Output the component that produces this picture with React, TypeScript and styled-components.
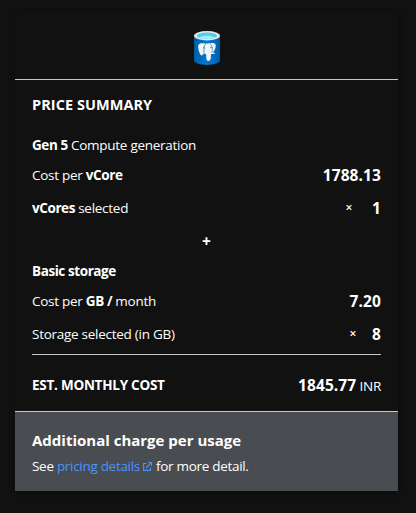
import React from "react";
import styled, { createGlobalStyle } from "styled-components";

const GlobalStyle = createGlobalStyle`
  * { box-sizing: border-box; }
  html, body { margin: 0; background: #111111; }
  body { font-family: "Segoe UI", "Open Sans", "Noto Sans", sans-serif; color: #fff; }
`;

const Page = styled.main`
  height: 513px;
  padding: 12px 18px 22px 15px;
  background: #111111;
  overflow: hidden;
`;

const Card = styled.section`
  width: 383px;
  height: 479px;
  display: flex;
  flex-direction: column;
  background: #111111;
  box-shadow: 0 1px 5px rgba(0, 0, 0, 0.55);
`;

const Header = styled.header`
  height: 68px;
  flex: none;
  display: flex;
  justify-content: center;
  padding-top: 19px;
  border-bottom: 1px solid #c8c6c4;
`;

const Body = styled.div`
  height: 331px;
  flex: none;
  padding: 0 17px;
  display: flex;
  flex-direction: column;
`;

const Row = styled.div<{ $height: number }>`
  height: ${(p) => p.$height}px;
  flex: none;
  display: flex;
  align-items: center;
  justify-content: space-between;
  white-space: pre;
`;

const Text = styled.span<{ $size?: number; $track?: number }>`
  font-size: ${(p) => p.$size ?? 13.5}px;
  line-height: 20px;
  letter-spacing: ${(p) => p.$track ?? -0.27}px;
  white-space: pre;
`;

const Strong = styled.strong<{ $track?: number }>`
  font-weight: 700;
  letter-spacing: ${(p) => p.$track ?? -0.42}px;
`;

const Amount = styled(Text)`
  font-size: 15.5px;
  font-weight: 700;
  letter-spacing: 0.1px;
`;

const Factor = styled.span<{ $gap: number }>`
  display: flex;
  align-items: center;
  gap: ${(p) => p.$gap}px;
`;

const Times = styled(Text)`
  font-size: 12px;
  font-weight: 600;
  padding-top: 1px;
`;

const Plus = styled.div`
  height: 30px;
  flex: none;
  display: flex;
  align-items: center;
  justify-content: center;
`;

const Divider = styled.hr`
  width: 100%;
  height: 1px;
  flex: none;
  margin: 3px 0 0;
  border: 0;
  background: #c8c6c4;
`;

const Footer = styled.footer`
  flex: 1;
  padding: 18px 17px 0;
  display: flex;
  flex-direction: column;
  gap: 6px;
  background: #494c50;
  border-top: 1px solid #c8c6c4;
`;

const Link = styled.a`
  color: #4894fe;
  text-decoration: none;
`;

const LinkIcon = styled.svg`
  margin: 0 4px 0 3px;
  vertical-align: 0;
`;

const PostgresIcon = () => (
  <svg width="26" height="35" viewBox="0 0 26 35" aria-label="PostgreSQL">
    <defs>
      <linearGradient id="body" x1="0" x2="1">
        <stop offset="0" stopColor="#005ba1" />
        <stop offset=".18" stopColor="#0067b8" />
        <stop offset=".5" stopColor="#0078d4" />
        <stop offset=".85" stopColor="#0067b8" />
        <stop offset="1" stopColor="#005ba1" />
      </linearGradient>
    </defs>
    <path d="M0 4.700v24.600c0 2.600 5.800 4.700 13 4.700s13-2.100 13-4.700V4.700z" fill="url(#body)" />
    <ellipse cx="13" cy="4.700" rx="13" ry="4.700" fill="#e8e8e8" />
    <ellipse cx="13" cy="4.700" rx="10.200" ry="3.200" fill="#50d0e8" />
    <path d="M5 6.400c2-1.100 5-1.600 8-1.600s6 .5 8 1.600c-2 1-5 1.500-8 1.500s-6-.5-8-1.500z" fill="#9cebff" />
    <path
      d="M8.400 12.200c-3.400-.4-4.700 1.800-4.100 5.100.6 3.200 1.700 6.700 3.100 7.100 1 .2 1.700-1 2.500-1.800.7.500 1.500.5 2.200.3.200 1.700 0 3.600.4 5.200.4 1.700 1.300 2 2.300 1.800 1.400-.3 1.900-1.300 2-2.800l.2-4.100c1.500.3 3.500 0 4.500-1-1-.1-2-.1-2.300-.5 2-2.900 3.300-7.200 2-8.500-1.500-1.500-3.800-1.200-5.400-.7-1.400-.3-2.700-.2-3.800.4-1.100-.4-2.400-.5-3.600-.5z"
      fill="#f2f4f6"
    />
    <path
      d="M12 12.700c-1.900 1.200-2.100 3.200-1.900 5 .1 1.600-.8 2.900 0 4.600M8.800 16.800c1.200-.3 2-.1 2.300.5M15.900 12.500c1.700 1.400 2.600 3.100 2.400 4.900-.1 1.700.3 2.700-.5 4.500M16 16.700l1.800-.3"
      fill="none"
      stroke="#2876b8"
      strokeWidth=".75"
    />
  </svg>
);

const ExternalIcon = () => (
  <LinkIcon width="9" height="9" viewBox="0 0 9 9" fill="none" stroke="#4894fe">
    <path d="M3.500 1.500H.6v6.900h6.900V5.500M3 6l5-5" strokeWidth="1.100" />
    <path d="M5.200.5h3.300v3.300M7 .8h1.500v1.500" strokeWidth="1.200" />
  </LinkIcon>
);

export default function App() {
  return (
    <Page>
      <GlobalStyle />
      <Card>
        <Header>
          <PostgresIcon />
        </Header>
        <Body>
          <Row $height={49}>
            <Text $size={14.5}><Strong $track={0.05}>PRICE SUMMARY</Strong></Text>
          </Row>
          <Row $height={32}>
            <Text><Strong>Gen 5</Strong> Compute generation</Text>
          </Row>
          <Row $height={28}>
            <Text>Cost per <Strong>vCore</Strong></Text>
            <Amount>1788.13</Amount>
          </Row>
          <Row $height={37}>
            <Text><Strong>vCores</Strong> selected</Text>
            <Factor $gap={20}><Times>×</Times><Amount>1</Amount></Factor>
          </Row>
          <Plus><Amount>+</Amount></Plus>
          <Row $height={29}>
            <Text><Strong>Basic storage</Strong></Text>
          </Row>
          <Row $height={31}>
            <Text>Cost per <Strong>GB /</Strong> month</Text>
            <Amount>7.20</Amount>
          </Row>
          <Row $height={35}>
            <Text>Storage selected (in GB)</Text>
            <Factor $gap={16}><Times>×</Times><Amount>8</Amount></Factor>
          </Row>
          <Divider />
          <Row $height={59}>
            <Text><Strong $track={-0.25}>EST. MONTHLY COST</Strong></Text>
            <span><Amount>1845.77</Amount><Text> INR</Text></span>
          </Row>
        </Body>
        <Footer>
          <Text $size={15}><Strong $track={0}>Additional charge per usage</Strong></Text>
          <Text $track={-0.3}>See <Link>pricing details<ExternalIcon /></Link>for more detail.</Text>
        </Footer>
      </Card>
    </Page>
  );
}
